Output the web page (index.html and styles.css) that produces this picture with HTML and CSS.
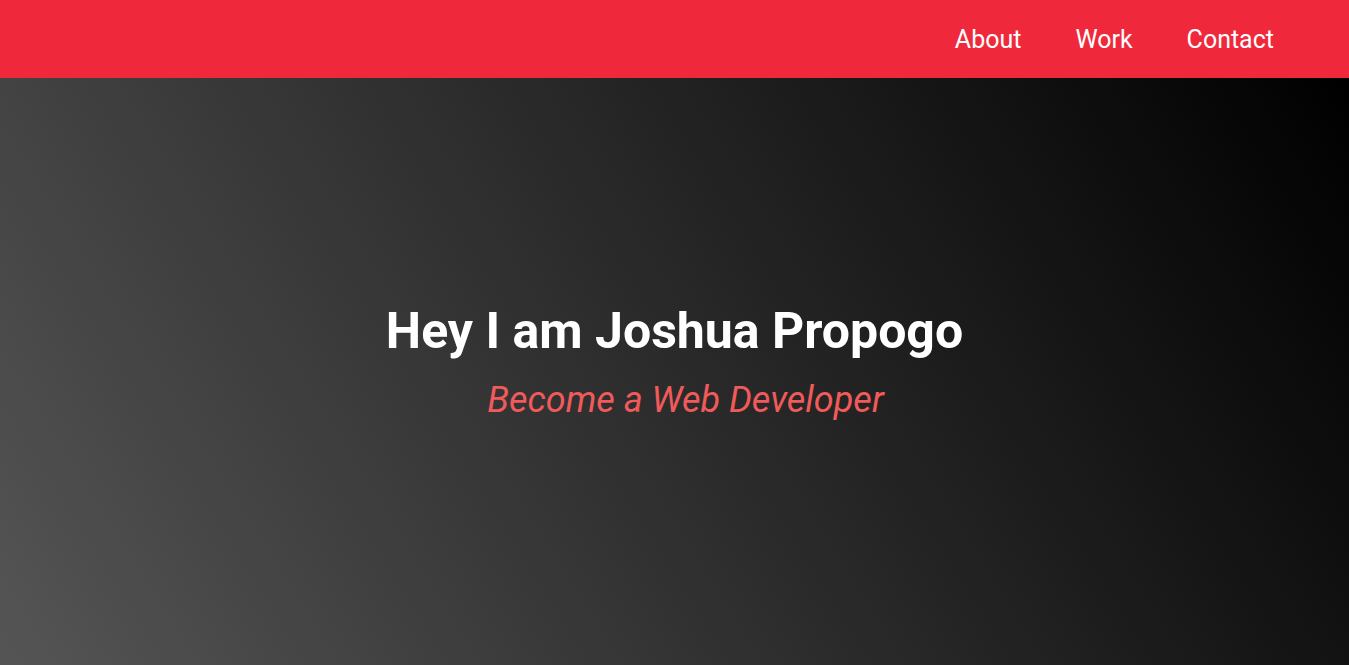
FILE: index.html
```html
<!DOCTYPE html>
<html lang="en">
<head>
<meta charset="utf-8">
<title>Joshua Propogo</title>
<link rel="stylesheet" href="styles.css">
</head>
<body>
<header class="navbar">
  <nav class="nav-links">
    <a href="#about" class="nav-link">About</a>
    <a href="#work" class="nav-link">Work</a>
    <a href="#contact" class="nav-link">Contact</a>
  </nav>
</header>
<main class="hero">
  <div class="hero-content">
    <h1 class="hero-title">Hey I am Joshua Propogo</h1>
    <p class="hero-subtitle">Become a Web Developer</p>
  </div>
</main>
</body>
</html>
```
FILE: styles.css
```css
* { box-sizing: border-box; }
html, body { margin: 0; padding: 0; height: 100%; }
body {
  font-family: Roboto, "Liberation Sans", Arial, sans-serif;
  display: flex;
  flex-direction: column;
  overflow: hidden;
}
.navbar {
  background: #ef293b;
  height: 78px;
  flex: 0 0 78px;
  display: flex;
  justify-content: flex-end;
  align-items: center;
  padding-right: 75px;
}
.nav-links {
  display: flex;
  gap: 54px;
}
.nav-link {
  color: #fff;
  text-decoration: none;
  font-size: 25px;
  line-height: 1;
}
.hero {
  flex: 1;
  background: linear-gradient(58deg, #555555, #000000);
  display: flex;
  align-items: center;
  justify-content: center;
}
.hero-content {
  text-align: center;
}
.hero-title {
  color: #fff;
  font-size: 50px;
  font-weight: 700;
  margin: 0;
}
.hero-subtitle {
  color: #f05a5a;
  font-size: 36px;
  font-style: italic;
  margin: 19px 0 20px;
  padding-left: 22px;
}
```
